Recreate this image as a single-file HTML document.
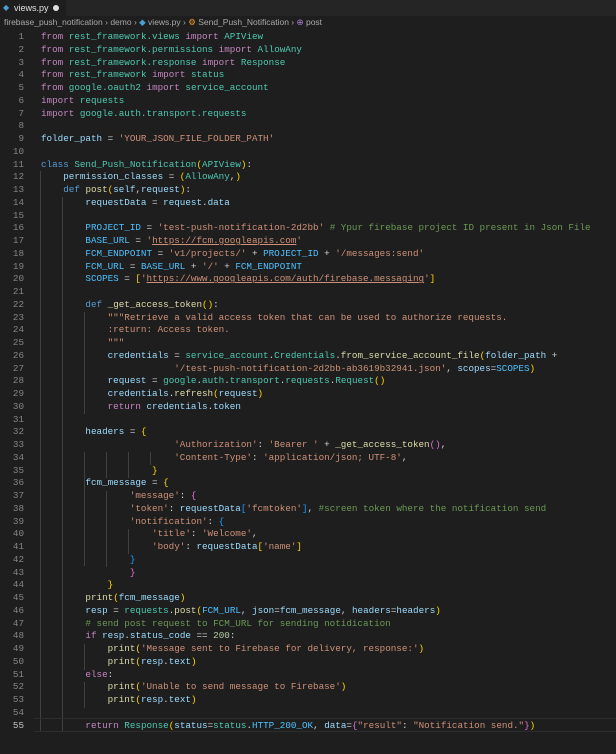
<!DOCTYPE html>
<html><head><meta charset="utf-8"><style>
html,body{margin:0;padding:0;background:#1e1e1e;width:616px;height:754px;overflow:hidden}
.tabs{position:absolute;left:0;top:0;width:616px;height:16px;background:#252526}
.tab{position:absolute;left:0;top:0;width:66px;height:16px;background:#1e1e1e;font:9px "Liberation Sans",sans-serif;color:#e0e0e0}
.bc{position:absolute;left:4px;top:17px;font:8.5px "Liberation Sans",sans-serif;color:#a9a9a9;white-space:pre}
.code{position:absolute;left:0;top:31px;font:9.25px/12.75px "Liberation Mono",monospace;color:#d4d4d4}
.l{position:relative;height:12.75px;white-space:pre}
.n{position:absolute;left:0;width:24px;text-align:right;color:#858585}
.t{position:absolute;left:41px}
.k{color:#c586c0}.b{color:#569cd6}.g{color:#4ec9b0}.v{color:#9cdcfe}.s{color:#ce9178}.f{color:#dcdcaa}.c{color:#6a9955}.y{color:#ffd700}.m{color:#da70d6}.q{color:#179fff}.w{color:#4fc1ff}
.u{text-decoration:underline;text-decoration-color:#ce9178}
.gd{position:absolute;width:1px;background:#404040}
.cur{border-top:1px solid #2c2c2c;border-bottom:1px solid #2c2c2c;position:absolute;left:34px;width:582px;height:12px}
</style></head><body>
<div class="tabs"><div class="tab"><span style="position:absolute;left:3px;top:3px;color:#4a9ed6;font-size:8px">◆</span><span style="position:absolute;left:14px;top:3px">views.py</span><span style="position:absolute;left:53px;top:5px;width:6px;height:6px;border-radius:3px;background:#e0e0e0"></span></div></div>
<div class="bc">firebase_push_notification › demo › <span style="color:#4a9ed6">◆</span> views.py › <span style="color:#ee9d28">⚙</span> Send_Push_Notification › <span style="color:#b180d7">⊕</span> post</div>
<div class="gd" style="left:40px;top:171px;height:560px"></div>
<div class="gd" style="left:62px;top:197px;height:534px"></div>
<div class="gd" style="left:84px;top:312px;height:102px"></div>
<div class="gd" style="left:84px;top:452px;height:114px"></div>
<div class="gd" style="left:106px;top:452px;height:26px"></div>
<div class="gd" style="left:106px;top:491px;height:76px"></div>
<div class="gd" style="left:128px;top:452px;height:26px"></div>
<div class="gd" style="left:128px;top:529px;height:25px"></div>
<div class="gd" style="left:150px;top:452px;height:13px"></div>
<div class="gd" style="left:84px;top:644px;height:26px"></div>
<div class="gd" style="left:84px;top:682px;height:26px"></div>
<div class="cur" style="top:718px"></div>
<div class="code">
<div class="l"><span class="n">1</span><span class="t"><span class="k">from</span> <span class="g">rest_framework.views</span> <span class="k">import</span> <span class="g">APIView</span></span></div>
<div class="l"><span class="n">2</span><span class="t"><span class="k">from</span> <span class="g">rest_framework.permissions</span> <span class="k">import</span> <span class="g">AllowAny</span></span></div>
<div class="l"><span class="n">3</span><span class="t"><span class="k">from</span> <span class="g">rest_framework.response</span> <span class="k">import</span> <span class="g">Response</span></span></div>
<div class="l"><span class="n">4</span><span class="t"><span class="k">from</span> <span class="g">rest_framework</span> <span class="k">import</span> <span class="g">status</span></span></div>
<div class="l"><span class="n">5</span><span class="t"><span class="k">from</span> <span class="g">google.oauth2</span> <span class="k">import</span> <span class="g">service_account</span></span></div>
<div class="l"><span class="n">6</span><span class="t"><span class="k">import</span> <span class="g">requests</span></span></div>
<div class="l"><span class="n">7</span><span class="t"><span class="k">import</span> <span class="g">google.auth.transport.requests</span></span></div>
<div class="l"><span class="n">8</span><span class="t"></span></div>
<div class="l"><span class="n">9</span><span class="t"><span class="v">folder_path</span> = <span class="s">'YOUR_JSON_FILE_FOLDER_PATH'</span></span></div>
<div class="l"><span class="n">10</span><span class="t"></span></div>
<div class="l"><span class="n">11</span><span class="t"><span class="b">class</span> <span class="g">Send_Push_Notification</span><span class="y">(</span><span class="g">APIView</span><span class="y">)</span>:</span></div>
<div class="l"><span class="n">12</span><span class="t">    <span class="v">permission_classes</span> = <span class="y">(</span><span class="g">AllowAny</span>,<span class="y">)</span></span></div>
<div class="l"><span class="n">13</span><span class="t">    <span class="b">def</span> <span class="f">post</span><span class="y">(</span><span class="v">self</span>,<span class="v">request</span><span class="y">)</span>:</span></div>
<div class="l"><span class="n">14</span><span class="t">        <span class="v">requestData</span> = <span class="v">request</span>.<span class="v">data</span></span></div>
<div class="l"><span class="n">15</span><span class="t"></span></div>
<div class="l"><span class="n">16</span><span class="t">        <span class="w">PROJECT_ID</span> = <span class="s">'test-push-notification-2d2bb'</span> <span class="c"># Ypur firebase project ID present in Json File</span></span></div>
<div class="l"><span class="n">17</span><span class="t">        <span class="w">BASE_URL</span> = <span class="s">'<span class="u">https://fcm.googleapis.com</span>'</span></span></div>
<div class="l"><span class="n">18</span><span class="t">        <span class="w">FCM_ENDPOINT</span> = <span class="s">'v1/projects/'</span> + <span class="w">PROJECT_ID</span> + <span class="s">'/messages:send'</span></span></div>
<div class="l"><span class="n">19</span><span class="t">        <span class="w">FCM_URL</span> = <span class="w">BASE_URL</span> + <span class="s">'/'</span> + <span class="w">FCM_ENDPOINT</span></span></div>
<div class="l"><span class="n">20</span><span class="t">        <span class="w">SCOPES</span> = <span class="y">[</span><span class="s">'<span class="u">https://www.googleapis.com/auth/firebase.messaging</span>'</span><span class="y">]</span></span></div>
<div class="l"><span class="n">21</span><span class="t"></span></div>
<div class="l"><span class="n">22</span><span class="t">        <span class="b">def</span> <span class="f">_get_access_token</span><span class="y">()</span>:</span></div>
<div class="l"><span class="n">23</span><span class="t">            <span class="s">"""Retrieve a valid access token that can be used to authorize requests.</span></span></div>
<div class="l"><span class="n">24</span><span class="t"><span class="s">            :return: Access token.</span></span></div>
<div class="l"><span class="n">25</span><span class="t"><span class="s">            """</span></span></div>
<div class="l"><span class="n">26</span><span class="t">            <span class="v">credentials</span> = <span class="g">service_account</span>.<span class="g">Credentials</span>.<span class="f">from_service_account_file</span><span class="y">(</span><span class="v">folder_path</span> +</span></div>
<div class="l"><span class="n">27</span><span class="t">                        <span class="s">'/test-push-notification-2d2bb-ab3619b32941.json'</span>, <span class="v">scopes</span>=<span class="w">SCOPES</span><span class="y">)</span></span></div>
<div class="l"><span class="n">28</span><span class="t">            <span class="v">request</span> = <span class="g">google</span>.<span class="g">auth</span>.<span class="g">transport</span>.<span class="g">requests</span>.<span class="g">Request</span><span class="y">()</span></span></div>
<div class="l"><span class="n">29</span><span class="t">            <span class="v">credentials</span>.<span class="f">refresh</span><span class="y">(</span><span class="v">request</span><span class="y">)</span></span></div>
<div class="l"><span class="n">30</span><span class="t">            <span class="k">return</span> <span class="v">credentials</span>.<span class="v">token</span></span></div>
<div class="l"><span class="n">31</span><span class="t"></span></div>
<div class="l"><span class="n">32</span><span class="t">        <span class="v">headers</span> = <span class="y">{</span></span></div>
<div class="l"><span class="n">33</span><span class="t">                        <span class="s">'Authorization'</span>: <span class="s">'Bearer '</span> + <span class="f">_get_access_token</span><span class="m">()</span>,</span></div>
<div class="l"><span class="n">34</span><span class="t">                        <span class="s">'Content-Type'</span>: <span class="s">'application/json; UTF-8'</span>,</span></div>
<div class="l"><span class="n">35</span><span class="t">                    <span class="y">}</span></span></div>
<div class="l"><span class="n">36</span><span class="t">        <span class="v">fcm_message</span> = <span class="y">{</span></span></div>
<div class="l"><span class="n">37</span><span class="t">                <span class="s">'message'</span>: <span class="m">{</span></span></div>
<div class="l"><span class="n">38</span><span class="t">                <span class="s">'token'</span>: <span class="v">requestData</span><span class="q">[</span><span class="s">'fcmtoken'</span><span class="q">]</span>, <span class="c">#screen token where the notification send</span></span></div>
<div class="l"><span class="n">39</span><span class="t">                <span class="s">'notification'</span>: <span class="q">{</span></span></div>
<div class="l"><span class="n">40</span><span class="t">                    <span class="s">'title'</span>: <span class="s">'Welcome'</span>,</span></div>
<div class="l"><span class="n">41</span><span class="t">                    <span class="s">'body'</span>: <span class="v">requestData</span><span class="y">[</span><span class="s">'name'</span><span class="y">]</span></span></div>
<div class="l"><span class="n">42</span><span class="t">                <span class="q">}</span></span></div>
<div class="l"><span class="n">43</span><span class="t">                <span class="m">}</span></span></div>
<div class="l"><span class="n">44</span><span class="t">            <span class="y">}</span></span></div>
<div class="l"><span class="n">45</span><span class="t">        <span class="f">print</span><span class="y">(</span><span class="v">fcm_message</span><span class="y">)</span></span></div>
<div class="l"><span class="n">46</span><span class="t">        <span class="v">resp</span> = <span class="g">requests</span>.<span class="f">post</span><span class="y">(</span><span class="w">FCM_URL</span>, <span class="v">json</span>=<span class="v">fcm_message</span>, <span class="v">headers</span>=<span class="v">headers</span><span class="y">)</span></span></div>
<div class="l"><span class="n">47</span><span class="t">        <span class="c"># send post request to FCM_URL for sending notidication</span></span></div>
<div class="l"><span class="n">48</span><span class="t">        <span class="k">if</span> <span class="v">resp</span>.<span class="v">status_code</span> == <span style="color:#b5cea8">200</span>:</span></div>
<div class="l"><span class="n">49</span><span class="t">            <span class="f">print</span><span class="y">(</span><span class="s">'Message sent to Firebase for delivery, response:'</span><span class="y">)</span></span></div>
<div class="l"><span class="n">50</span><span class="t">            <span class="f">print</span><span class="y">(</span><span class="v">resp</span>.<span class="v">text</span><span class="y">)</span></span></div>
<div class="l"><span class="n">51</span><span class="t">        <span class="k">else</span>:</span></div>
<div class="l"><span class="n">52</span><span class="t">            <span class="f">print</span><span class="y">(</span><span class="s">'Unable to send message to Firebase'</span><span class="y">)</span></span></div>
<div class="l"><span class="n">53</span><span class="t">            <span class="f">print</span><span class="y">(</span><span class="v">resp</span>.<span class="v">text</span><span class="y">)</span></span></div>
<div class="l"><span class="n">54</span><span class="t"></span></div>
<div class="l"><span class="n" style="color:#c6c6c6">55</span><span class="t">        <span class="k">return</span> <span class="g">Response</span><span class="y">(</span><span class="v">status</span>=<span class="g">status</span>.<span class="w">HTTP_200_OK</span>, <span class="v">data</span>=<span class="m">{</span><span class="s">"result"</span>: <span class="s">"Notification send."</span><span class="m">}</span><span class="y">)</span></span></div>
</div>
</body></html>
